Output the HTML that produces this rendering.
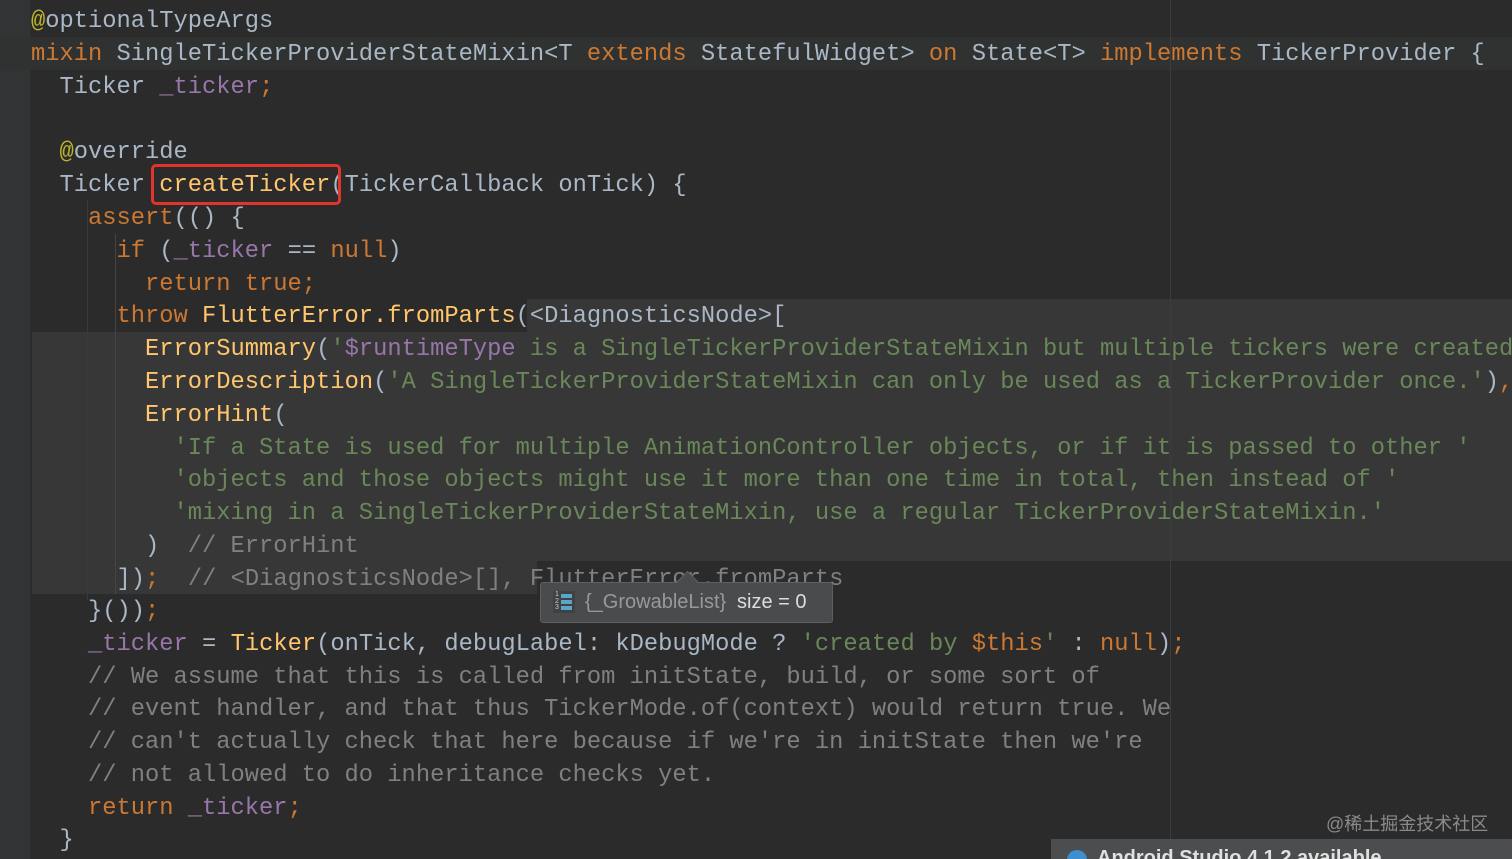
<!DOCTYPE html>
<html><head><meta charset="utf-8"><style>
body{margin:0;width:1512px;height:859px;background:#2b2b2b;overflow:hidden;position:relative;font-family:"Liberation Mono",monospace;}
.gut{position:absolute;left:0;top:0;width:30px;height:859px;background:#313335;}
.l{position:absolute;left:31px;height:33px;line-height:33px;font-size:23.75px;white-space:pre;color:#a9b7c6;margin-top:1px;}
.k{color:#cc7832}.a{color:#bbb529}.f{color:#9876aa}.s{color:#6a8759}.y{color:#ffc66d}.c{color:#808080}
.hl{position:absolute;background:#373737;}
</style></head><body>
<div class="gut"></div>
<div class="hl" style="left:0;top:37px;width:1512px;height:33px;background:#2f3230"></div>
<div class="hl" style="left:527px;top:299px;width:985px;height:33px"></div>
<div class="hl" style="left:32px;top:332px;width:1480px;height:229px"></div>
<div class="hl" style="left:32px;top:561px;width:505px;height:33px"></div>
<div style="position:absolute;left:1170px;top:0;width:1px;height:840px;background:#3d3d3d"></div>
<div style="position:absolute;left:115px;top:234px;width:1px;height:360px;background:#444"></div>
<div style="position:absolute;left:87px;top:200px;width:1px;height:400px;background:#3a3a3a"></div>
<div class="l" style="top:4px"><span class="a">@</span>optionalTypeArgs</div>
<div class="l" style="top:37px"><span class="k">mixin </span>SingleTickerProviderStateMixin&lt;T <span class="k">extends </span>StatefulWidget&gt; <span class="k">on </span>State&lt;T&gt; <span class="k">implements </span>TickerProvider {</div>
<div class="l" style="top:70px">  Ticker <span class="f">_ticker</span><span class="k">;</span></div>
<div class="l" style="top:135px">  <span class="a">@</span>override</div>
<div class="l" style="top:168px">  Ticker <span class="y">createTicker</span>(TickerCallback onTick) {</div>
<div style="position:absolute;left:151px;top:164px;width:190px;height:41px;border:3px solid #e0342c;border-radius:5px;box-sizing:border-box"></div>
<div class="l" style="top:201px">    <span class="k">assert</span>(() {</div>
<div class="l" style="top:234px">      <span class="k">if </span>(<span class="f">_ticker </span>== <span class="k">null</span>)</div>
<div class="l" style="top:267px">        <span class="k">return true;</span></div>
<div class="l" style="top:299px">      <span class="k">throw </span><span class="y">FlutterError.fromParts</span>(&lt;DiagnosticsNode&gt;[</div>
<div class="l" style="top:332px">        <span class="y">ErrorSummary</span>(<span class="s">'</span><span class="f">$runtimeType</span><span class="s"> is a SingleTickerProviderStateMixin but multiple tickers were created</span></div>
<div class="l" style="top:365px">        <span class="y">ErrorDescription</span>(<span class="s">'A SingleTickerProviderStateMixin can only be used as a TickerProvider once.'</span>)<span class="k">,</span></div>
<div class="l" style="top:398px">        <span class="y">ErrorHint</span>(</div>
<div class="l" style="top:431px">          <span class="s">'If a State is used for multiple AnimationController objects, or if it is passed to other '</span></div>
<div class="l" style="top:463px">          <span class="s">'objects and those objects might use it more than one time in total, then instead of '</span></div>
<div class="l" style="top:496px">          <span class="s">'mixing in a SingleTickerProviderStateMixin, use a regular TickerProviderStateMixin.'</span></div>
<div class="l" style="top:529px">        )  <span class="c">// ErrorHint</span></div>
<div class="l" style="top:562px">      ])<span class="k">;</span>  <span class="c">// &lt;DiagnosticsNode&gt;[], FlutterError.fromParts</span></div>
<div class="l" style="top:594px">    }())<span class="k">;</span></div>
<div class="l" style="top:627px">    <span class="f">_ticker </span>= <span class="y">Ticker</span>(onTick, debugLabel: kDebugMode ? <span class="s">'created by </span><span class="k">$this</span><span class="s">'</span> : <span class="k">null</span>)<span class="k">;</span></div>
<div class="l c" style="top:660px">    // We assume that this is called from initState, build, or some sort of</div>
<div class="l c" style="top:692px">    // event handler, and that thus TickerMode.of(context) would return true. We</div>
<div class="l c" style="top:725px">    // can't actually check that here because if we're in initState then we're</div>
<div class="l c" style="top:758px">    // not allowed to do inheritance checks yet.</div>
<div class="l" style="top:791px">    <span class="k">return </span><span class="f">_ticker</span><span class="k">;</span></div>
<div class="l" style="top:823px">  }</div>
<div style="position:absolute;left:540px;top:582px;width:293px;height:41px;background:#4a4b4c;border:1px solid #5d5f61;border-radius:3px;box-sizing:border-box;font-family:'Liberation Sans',sans-serif;font-size:20px;line-height:39px;color:#ddd">
<div style="position:absolute;left:139px;top:-9px;width:14px;height:14px;background:#4a4b4c;border-left:1px solid #5d5f61;border-top:1px solid #5d5f61;transform:rotate(45deg)"></div>
<div style="position:absolute;left:12px;top:8px;width:22px;height:22px;background:#3f4142"></div>
<div style="position:absolute;left:14px;top:9px;font-size:7px;line-height:6.5px;color:#ccc">1<br>2<br>3</div>
<div style="position:absolute;left:20px;top:11px;width:11px;height:4px;background:#5aa5c8"></div>
<div style="position:absolute;left:20px;top:17px;width:11px;height:4px;background:#5aa5c8"></div>
<div style="position:absolute;left:20px;top:23px;width:11px;height:4px;background:#5aa5c8"></div>
<span style="position:absolute;left:44px;color:#999;white-space:nowrap">{_GrowableList}</span><span style="position:absolute;left:196px;white-space:nowrap">size = 0</span></div>
<div style="position:absolute;left:1326px;top:810px;font-family:'Liberation Sans','Noto Sans CJK SC',sans-serif;font-size:18px;color:#8a8a8a">@稀土掘金技术社区</div>
<div style="position:absolute;left:1051px;top:839px;width:461px;height:20px;background:#4b4d4f;overflow:hidden">
<div style="position:absolute;left:16px;top:11px;width:20px;height:20px;border-radius:50%;background:#3d8fd0"></div>
<div style="position:absolute;left:46px;top:8px;font-family:'Liberation Sans',sans-serif;font-weight:bold;font-size:20px;color:#e0e0e0">Android Studio 4.1.2 available</div></div>
</body></html>
